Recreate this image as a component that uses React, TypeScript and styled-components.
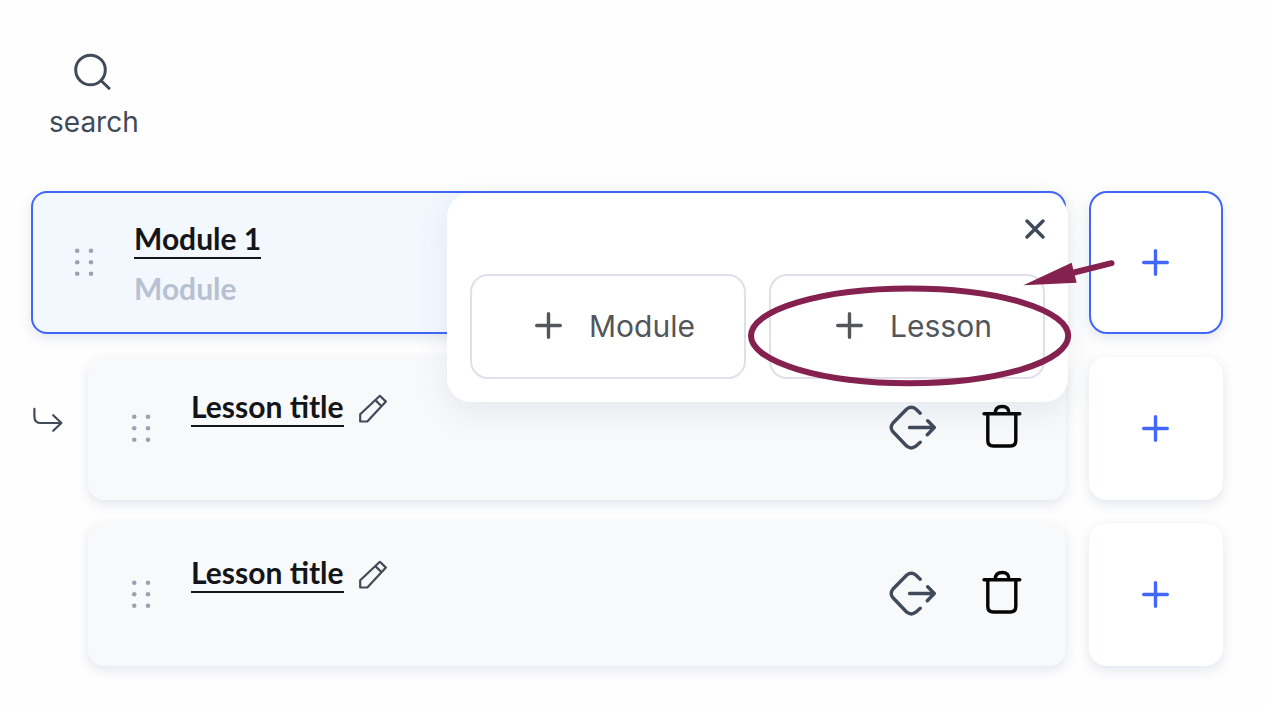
import React from "react";
import styled, { createGlobalStyle } from "styled-components";

const GlobalStyle = createGlobalStyle`
  *, *::before, *::after { box-sizing: border-box; }
  body {
    margin: 0;
    background: #fefefe;
    color: #414a59;
    font-family: Inter, "Liberation Sans", sans-serif;
  }
  button {
    margin: 0;
    padding: 0;
    border: 0;
    background: none;
    color: inherit;
    font: inherit;
    cursor: pointer;
  }
  svg { display: block; flex: none; }
`;

const Page = styled.main`
  padding: 50px 43px 40px 31px;
`;

const SearchButton = styled.button`
  display: flex;
  flex-direction: column;
  align-items: center;
  gap: 14px;
  margin: 0 0 51px 18px;
  font-size: 28px;
  line-height: 36px;
`;

const Rows = styled.div`
  display: flex;
  flex-direction: column;
  gap: 23px;
`;

const Row = styled.section<{ $raised?: boolean }>`
  position: relative;
  z-index: ${(p) => (p.$raised ? 1 : 0)};
  display: flex;
  min-height: 143px;
`;

const Indent = styled.div`
  flex: none;
  width: 57px;
  padding-top: 49px;
`;

const Card = styled.article<{ $active?: boolean }>`
  flex: 1;
  display: flex;
  align-items: center;
  gap: 40px;
  margin-right: 23px;
  padding: 0 42px 2px 41px;
  border: 2px solid ${(p) => (p.$active ? "#4166f8" : "#f8f9fb")};
  border-radius: 16px;
  background: ${(p) => (p.$active ? "#f3f8ff" : "#f8f9fb")};
  box-shadow: 0 4px 12px rgba(70, 95, 145, 0.15);
`;

const Grip = styled.button`
  color: #9ba3b3;
  cursor: grab;
`;

const Details = styled.div<{ $top: number }>`
  flex: 1;
  align-self: flex-start;
  padding-top: ${(p) => p.$top}px;
  font-family: Lato, "Liberation Sans", sans-serif;
  font-size: 30px;
  font-weight: 700;
  line-height: 36px;
`;

const TitleLine = styled.div`
  display: flex;
  align-items: center;
  gap: 14px;
`;

const Title = styled.a`
  padding-bottom: 1px;
  border-bottom: 2px solid #141518;
  color: #141518;
  text-decoration: none;
`;

const Kind = styled.p`
  margin: 11px 0 0;
  color: #b8c1d1;
`;

const Actions = styled.div`
  display: flex;
  gap: 45px;
`;

const DeleteButton = styled.button`
  color: #050505;
`;

const AddButton = styled.button<{ $active?: boolean }>`
  flex: none;
  display: grid;
  place-items: center;
  width: 134px;
  padding-right: 2px;
  border: 2px solid ${(p) => (p.$active ? "#4166f8" : "#fff")};
  border-radius: 18px;
  background: #fff;
  color: #4166f8;
  box-shadow: 0 4px 12px rgba(70, 95, 145, 0.15);
`;

const Popover = styled.div`
  position: absolute;
  top: 2px;
  right: 155px;
  width: 621px;
  padding: 26px 23px 23px;
  border-radius: 24px;
  background: #fff;
  box-shadow: 0 10px 32px rgba(70, 100, 130, 0.11);
`;

const CloseButton = styled.button`
  display: block;
  margin: 0 0 35px auto;
`;

const Choices = styled.div`
  display: grid;
  grid-template-columns: 1fr 1fr;
  gap: 23px;
`;

const Choice = styled.button`
  display: flex;
  align-items: center;
  justify-content: center;
  gap: 27px;
  height: 105px;
  padding: 0 0 2px 14px;
  border: 2px solid #e1dfeb;
  border-radius: 18px;
  color: #53565b;
  font-size: 30px;
`;

const Callout = styled.svg`
  position: absolute;
  top: 67px;
  left: 301px;
  pointer-events: none;
`;

const stroke = (width: number) => ({
  fill: "none",
  stroke: "currentColor",
  strokeWidth: width,
  strokeLinecap: "round" as const,
  strokeLinejoin: "round" as const,
  "aria-hidden": true,
});

const SearchIcon = () => (
  <svg width="40" height="40" {...stroke(3)}>
    <circle cx="16.5" cy="20" r="14.8" />
    <path d="M27.2 30.7 35 38.3" />
  </svg>
);

const GripIcon = () => (
  <svg width="20" height="28" fill="currentColor" aria-hidden="true">
    {[2.8, 14.3, 25.7].map((y) => (
      <React.Fragment key={y}>
        <circle cx="3.2" cy={y} r="2.3" />
        <circle cx="17" cy={y} r="2.3" />
      </React.Fragment>
    ))}
  </svg>
);

const PlusIcon = () => (
  <svg width="27" height="27" {...stroke(3.4)}>
    <path d="M13.5 1.7v23.6M1.7 13.5h23.6" />
  </svg>
);

const CloseIcon = () => (
  <svg width="20" height="20" {...stroke(3.4)}>
    <path d="m2 2 16 16M18 2 2 18" />
  </svg>
);

const PencilIcon = () => (
  <svg width="30" height="30" {...stroke(2.2)}>
    <path d="M2.2 28.5v-7.2L21.9 2.8l6 5.8L9.3 28.5zM17.4 7.1l6.2 6.2" />
  </svg>
);

const NestedIcon = () => (
  <svg width="34" height="28" {...stroke(2.2)}>
    <path d="M3.4 2.8v7.6q0 6.6 6.6 6.6h20.4M22.2 9.2l8.2 7.8-8.2 7.8" />
  </svg>
);

const MoveIcon = () => (
  <svg width="48" height="48" {...stroke(3.4)}>
    <path d="M31.2 9.2 26.8 5q-4.5-3.7-9 0L4 19q-3.6 4.4 0 8.8l13.8 14.4q4.5 3.5 9 0l4.4-4M20.5 23.5H45M38.7 16.8l6.6 6.7-7 7.3" />
  </svg>
);

const TrashIcon = () => (
  <svg width="40" height="48" {...stroke(3.4)}>
    <path d="M2 9.7h35.8M5.8 10v26.5q0 5.5 5.5 5.5h17q5.5 0 5.5-5.5V10M13.2 9.5q0-7 7-7t6.6 7" />
  </svg>
);

const Lesson = ({ nested }: { nested?: boolean }) => (
  <Row>
    <Indent>{nested && <NestedIcon />}</Indent>
    <Card>
      <Grip aria-label="Reorder lesson">
        <GripIcon />
      </Grip>
      <Details $top={29}>
        <TitleLine>
          <Title href="#lesson">Lesson title</Title>
          <button aria-label="Edit title">
            <PencilIcon />
          </button>
        </TitleLine>
      </Details>
      <Actions>
        <button aria-label="Move lesson">
          <MoveIcon />
        </button>
        <DeleteButton aria-label="Delete lesson">
          <TrashIcon />
        </DeleteButton>
      </Actions>
    </Card>
    <AddButton aria-label="Add below lesson">
      <PlusIcon />
    </AddButton>
  </Row>
);

const AddPopover = () => (
  <Popover role="dialog" aria-label="Add content">
    <CloseButton aria-label="Close">
      <CloseIcon />
    </CloseButton>
    <Choices>
      <Choice>
        <PlusIcon />
        Module
      </Choice>
      <Choice>
        <PlusIcon />
        Lesson
      </Choice>
    </Choices>
    <Callout width="370" height="130" aria-hidden="true">
      <g stroke="#85214f" strokeWidth="6" fill="none">
        <ellipse cx="161.6" cy="75.8" rx="158.6" ry="47.4" />
        <path d="M326 12.5 363.5 3.2" strokeLinecap="round" />
      </g>
      <path d="M275.3 25.3 323.6 2.7 328.6 22.7z" fill="#85214f" />
    </Callout>
  </Popover>
);

export default function App() {
  return (
    <>
      <GlobalStyle />
      <Page>
        <SearchButton>
          <SearchIcon />
          search
        </SearchButton>
        <Rows>
          <Row $raised>
            <Card $active>
              <Grip aria-label="Reorder module">
                <GripIcon />
              </Grip>
              <Details $top={27}>
                <TitleLine>
                  <Title href="#module">Module 1</Title>
                </TitleLine>
                <Kind>Module</Kind>
              </Details>
            </Card>
            <AddButton $active aria-label="Add below module">
              <PlusIcon />
            </AddButton>
            <AddPopover />
          </Row>
          <Lesson nested />
          <Lesson />
        </Rows>
      </Page>
    </>
  );
}
